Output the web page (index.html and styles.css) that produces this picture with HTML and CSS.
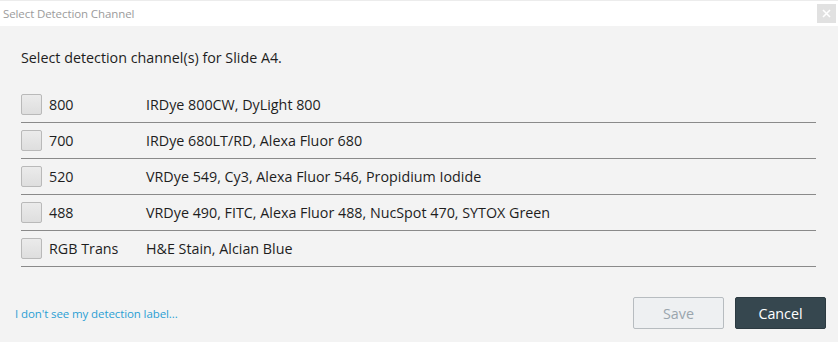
FILE: index.html
```html
<!DOCTYPE html>
<html>
<head>
<meta charset="utf-8">
<link rel="stylesheet" href="styles.css">
</head>
<body>
<div class="dialog">
  <div class="titlebar">
    <span class="title">Select Detection Channel</span>
    <span class="close">
      <svg width="9" height="9" viewBox="0 0 9 9"><path d="M1 1L8 8M8 1L1 8" stroke="#fff" stroke-width="1.6"/></svg>
    </span>
  </div>
  <div class="content">
    <p class="prompt">Select detection channel(s) for Slide A4.</p>
    <ul class="channels">
      <li class="row"><span class="check"></span><span class="name">800</span><span class="dyes">IRDye 800CW, DyLight 800</span></li>
      <li class="row"><span class="check"></span><span class="name">700</span><span class="dyes">IRDye 680LT/RD, Alexa Fluor 680</span></li>
      <li class="row"><span class="check"></span><span class="name">520</span><span class="dyes">VRDye 549, Cy3, Alexa Fluor 546, Propidium Iodide</span></li>
      <li class="row"><span class="check"></span><span class="name">488</span><span class="dyes">VRDye 490, FITC, Alexa Fluor 488, NucSpot 470, SYTOX Green</span></li>
      <li class="row"><span class="check"></span><span class="name">RGB Trans</span><span class="dyes">H&amp;E Stain, Alcian Blue</span></li>
    </ul>
  </div>
  <div class="footer">
    <a class="help" href="#">I don't see my detection label...</a>
    <div class="buttons">
      <button class="btn save" disabled>Save</button>
      <button class="btn cancel">Cancel</button>
    </div>
  </div>
</div>
</body>
</html>
```

FILE: styles.css
```css
* { box-sizing: border-box; }
html, body { margin: 0; padding: 0; }
body {
  width: 838px;
  height: 342px;
  background: #f3f3f3;
  font-family: "Open Sans", "Noto Sans", sans-serif;
  color: #1e1e1e;
  overflow: hidden;
}
.dialog {
  display: flex;
  flex-direction: column;
  height: 342px;
}
.titlebar {
  height: 26px;
  background: #ffffff;
  border-top: 1px solid #ececec;
  display: flex;
  align-items: center;
  justify-content: space-between;
  padding: 0 2px 0 3px;
}
.title {
  font-size: 11.5px;
  color: #9b9b9b;
  letter-spacing: -0.1px;
}
.close {
  width: 19px;
  height: 19px;
  background: #e1e1e1;
  display: flex;
  align-items: center;
  justify-content: center;
}
.content {
  padding: 0 22px 0 21px;
}
.prompt {
  margin: 22px 0 0;
  font-size: 14.3px;
  line-height: 20px;
}
.channels {
  list-style: none;
  margin: 19px 0 0;
  padding: 0;
}
.row {
  display: flex;
  align-items: center;
  height: 36px;
  border-bottom: 1px solid #8a8a8a;
  font-size: 14.3px;
}
.check {
  width: 21px;
  height: 21px;
  border: 1px solid #b9b9b9;
  border-radius: 2px;
  background: linear-gradient(#ebebeb, #dedede);
  flex: none;
}
.name {
  width: 104px;
  padding-left: 7px;
  flex: none;
}
.footer {
  margin-top: auto;
  display: flex;
  align-items: center;
  justify-content: space-between;
  padding: 0 12px 13px 15px;
}
.help {
  color: #2b9fd3;
  font-size: 11.5px;
  text-decoration: none;
  letter-spacing: -0.1px;
}
.buttons {
  display: flex;
  gap: 11px;
}
.btn {
  height: 32px;
  width: 91px;
  font-family: inherit;
  font-size: 14.3px;
  border-radius: 2px;
}
.save {
  background: #eef0f2;
  border: 1px solid #b7bcc0;
  color: #9aa5ad;
}
.cancel {
  background: #36474f;
  border: 1px solid #2c3a41;
  color: #ffffff;
}
```
